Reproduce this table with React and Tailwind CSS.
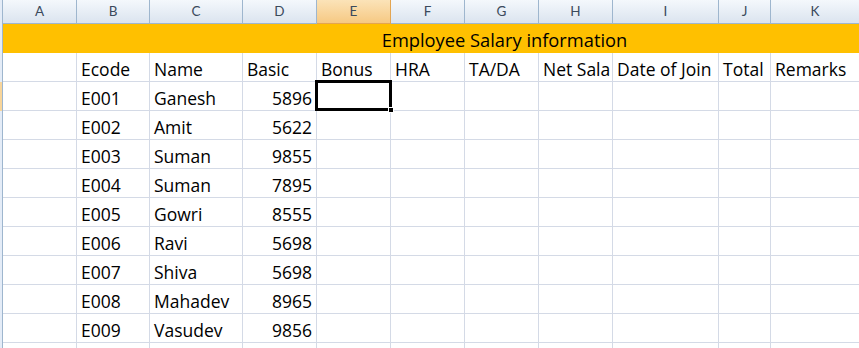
import React from "react";

const cols = [
  { key: "A", w: 74 },
  { key: "B", w: 73 },
  { key: "C", w: 93 },
  { key: "D", w: 74 },
  { key: "E", w: 74 },
  { key: "F", w: 74 },
  { key: "G", w: 74 },
  { key: "H", w: 74 },
  { key: "I", w: 106 },
  { key: "J", w: 52 },
  { key: "K", w: 89 },
];

const headings = ["", "Ecode", "Name", "Basic", "Bonus", "HRA", "TA/DA", "Net Sala", "Date of Join", "Total", "Remarks"];

const employees = [
  ["E001", "Ganesh", 5896],
  ["E002", "Amit", 5622],
  ["E003", "Suman", 9855],
  ["E004", "Suman", 7895],
  ["E005", "Gowri", 8555],
  ["E006", "Ravi", 5698],
  ["E007", "Shiva", 5698],
  ["E008", "Mahadev", 8965],
  ["E009", "Vasudev", 9856],
  ["", "", ""],
];

const font = { fontFamily: "'Open Sans', 'Noto Sans', sans-serif" };

function RowEdge({ active }) {
  return (
    <div
      className={
        "w-[3px] shrink-0 border-r border-[#9eb6ce] " +
        (active ? "bg-[#f8d59a]" : "bg-[#e4ecf7]")
      }
    />
  );
}

function Cell({ w, children, right, className = "" }) {
  return (
    <div
      style={{ width: w }}
      className={
        "shrink-0 h-full border-r border-b border-[#d4dae6] flex items-end pb-[3px] px-[4px] whitespace-nowrap " +
        (right ? "justify-end " : "") +
        className
      }
    >
      {children}
    </div>
  );
}

export default function App() {
  return (
    <div className="w-[859px] h-[348px] overflow-hidden bg-white text-[17.5px] text-black leading-none" style={font}>
      {/* column letters */}
      <div className="flex h-[24px]">
        <div className="w-[3px] shrink-0 bg-[#e4ecf7] border-r border-[#9eb6ce]" />
        {cols.map((c) => (
          <div
            key={c.key}
            className={
              "shrink-0 h-full border-r border-b flex items-center justify-center text-[13.5px] text-[#3b4a5c] " +
              (c.key === "E"
                ? "bg-gradient-to-b from-[#fbe3b8] to-[#f6c983] border-[#e3a552]"
                : "bg-gradient-to-b from-[#f4f8fc] to-[#dbe4ef] border-[#9eb6ce]")
            }
            style={{ width: c.w, fontFamily: "Lato, sans-serif" }}
          >
            {c.key}
          </div>
        ))}
      </div>

      {/* title row, merged C:K */}
      <div className="flex h-[29px]">
        <RowEdge />
        <div className="flex-1 bg-[#ffc000] flex">
          <div className="w-[147px] shrink-0" />
          <div className="flex-1 flex items-end justify-center pb-[4px] text-[18.3px]">Employee Salary information</div>
        </div>
      </div>

      {/* heading row */}
      <div className="flex h-[29px]">
        <RowEdge />
        {cols.map((c, i) => (
          <Cell key={c.key} w={c.w}>
            {headings[i]}
          </Cell>
        ))}
      </div>

      {employees.map(([code, name, basic], r) => (
        <div key={r} className="flex h-[29px]">
          <RowEdge active={r === 0} />
          {cols.map((c, i) => {
            let v = "";
            if (i === 1) v = code;
            if (i === 2) v = name;
            if (i === 3) v = basic;
            const selected = r === 0 && c.key === "E";
            return (
              <Cell key={c.key} w={c.w} right={i === 3} className={selected ? "relative" : "overflow-hidden"}>
                {v}
                {selected && (
                  <div className="absolute -left-[2px] -top-[2px] w-[77px] h-[31px] border-[3px] border-black z-10">
                    <div className="absolute -right-[5px] -bottom-[5px] w-[6px] h-[6px] bg-black border border-white" />
                  </div>
                )}
              </Cell>
            );
          })}
        </div>
      ))}
    </div>
  );
}
